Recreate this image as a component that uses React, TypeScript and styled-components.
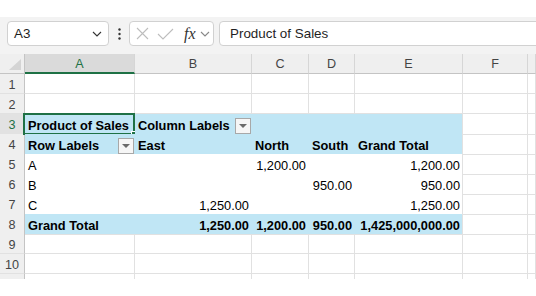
import React from "react";
import { createGlobalStyle, styled, css } from "styled-components";

const COLS = "25px 110px 117px 57px 46px 108px 65px 1fr";
const GREEN = "#1e7145";
const GRID = "#e1e1e1";
const PIVOT_BLUE = "#c0e6f5";
const PIVOT_LINE = "#5fb1de";

const GlobalStyle = createGlobalStyle`
    html, body {
        margin: 0;
        background: #fff;
        font-family: "Liberation Sans", Arial, sans-serif;
    }
`;

const Page = styled.div`
    width: 536px;
    height: 296px;
    overflow: hidden;
    display: flex;
    flex-direction: column;
`;

const TopStrip = styled.div`
    height: 17px;
    background: #fff;
`;

const Toolbar = styled.div`
    height: 37px;
    box-sizing: border-box;
    padding: 4px 0 0 7px;
    background: #f3f3f3;
    display: flex;
    align-items: flex-start;
    overflow: hidden;
`;

const Box = styled.div`
    height: 25px;
    box-sizing: border-box;
    border: 1px solid #d1d1d1;
    border-radius: 4px;
    background: #fff;
    display: flex;
    align-items: center;
`;

const NameBox = styled(Box)`
    width: 102px;
    padding: 0 6px 0 6px;
    justify-content: space-between;
    font-size: 13.4px;
    color: #1f1f1f;
`;

const MoreButton = styled.div`
    width: 20px;
    height: 25px;
    display: flex;
    align-items: center;
    justify-content: center;
`;

const FormulaButtons = styled(Box)`
    width: 85px;
    padding-left: 6px;
    gap: 8px;
`;

const Fx = styled.span`
    font-family: "Liberation Serif", "Times New Roman", serif;
    font-style: italic;
    font-size: 16px;
    color: #333;
    margin-left: 2px;
    margin-right: -4px;
`;

const FormulaInput = styled(Box)`
    flex: 1;
    margin-left: 5px;
    margin-right: -8px;
    padding-left: 10px;
    font-size: 13.4px;
    color: #1f1f1f;
`;

const Viewport = styled.div`
    height: 225px;
    overflow: hidden;
    background: #fff;
`;

const Row = styled.div`
    display: grid;
    grid-template-columns: ${COLS};
    height: 20px;
`;

const Corner = styled.div`
    position: relative;
    background: #efefef;
    border-right: 1px solid #c4c4c4;
    border-bottom: 1px solid #c4c4c4;
    box-sizing: border-box;
`;

const CornerMark = styled.span`
    position: absolute;
    right: 3px;
    bottom: 3px;
    width: 12px;
    height: 11px;
    background: #d4d4d4;
    clip-path: polygon(100% 0, 100% 100%, 0 100%);
`;

const ColHead = styled.div<{ $active?: boolean }>`
    box-sizing: border-box;
    background: ${(p) => (p.$active ? "#dadada" : "#efefef")};
    border-right: 1px solid #d6d6d6;
    border-bottom: ${(p) => (p.$active ? `2px solid ${GREEN}` : "1px solid #c4c4c4")};
    color: ${(p) => (p.$active ? GREEN : "#444")};
    font-size: 12.6px;
    display: flex;
    align-items: center;
    justify-content: center;
    padding-top: ${(p) => (p.$active ? "1px" : "0")};
`;

const RowHead = styled.div<{ $active?: boolean }>`
    box-sizing: border-box;
    background: ${(p) => (p.$active ? "#e2e2e2" : "#efefef")};
    border-right: 1px solid #c4c4c4;
    border-bottom: 1px solid ${GRID};
    color: ${(p) => (p.$active ? GREEN : "#444")};
    font-size: 12.6px;
    line-height: 16px;
    padding-top: 3px;
    text-align: center;
`;

type Band = "head" | "body" | "total";

const Cell = styled.div<{
    $band?: Band;
    $last?: boolean;
    $lineBelow?: boolean;
    $bold?: boolean;
    $right?: boolean;
}>`
    position: relative;
    box-sizing: border-box;
    display: flex;
    justify-content: ${(p) => (p.$right ? "flex-end" : "flex-start")};
    padding: 4px 2px 0 3px;
    font-size: 12.8px;
    line-height: 16px;
    white-space: nowrap;
    color: #000;
    font-weight: ${(p) => (p.$bold ? 700 : 400)};
    border-right: 1px solid ${GRID};
    border-bottom: 1px solid ${GRID};

    ${(p) =>
        p.$band &&
        css`
            background: ${p.$band === "body" ? "#fff" : PIVOT_BLUE};
            border-right-color: ${p.$last ? GRID : "transparent"};
            border-bottom-color: ${p.$lineBelow
                ? PIVOT_LINE
                : p.$band === "total"
                  ? GRID
                  : "transparent"};
        `}
`;

const FilterButton = styled.span`
    width: 16px;
    height: 16px;
    box-sizing: border-box;
    margin-left: auto;
    margin-right: -2px;
    border: 1px solid #a8a8a8;
    background: #f6f6f6;
    display: flex;
    align-items: center;
    justify-content: center;

    &::after {
        content: "";
        width: 0;
        height: 0;
        border-left: 4px solid transparent;
        border-right: 4px solid transparent;
        border-top: 4px solid #6b6b6b;
    }
`;

const Selection = styled.span`
    position: absolute;
    inset: -1px -1px -1px -2px;
    border: 2px solid ${GREEN};
    pointer-events: none;

    &::after {
        content: "";
        position: absolute;
        right: -5px;
        bottom: -5px;
        width: 5px;
        height: 5px;
        background: ${GREEN};
        border: 1px solid #fff;
    }
`;

type CellDef = { text?: string; bold?: boolean; right?: boolean; filter?: boolean };
type RowDef = { band?: Band; lineBelow?: boolean; cells: CellDef[] };

const rows: RowDef[] = [
    { cells: [] },
    { cells: [] },
    {
        band: "head",
        cells: [
            { text: "Product of Sales", bold: true },
            { text: "Column Labels", bold: true, filter: true },
            {},
            {},
            {},
        ],
    },
    {
        band: "head",
        lineBelow: true,
        cells: [
            { text: "Row Labels", bold: true, filter: true },
            { text: "East", bold: true },
            { text: "North", bold: true },
            { text: "South", bold: true },
            { text: "Grand Total", bold: true },
        ],
    },
    {
        band: "body",
        cells: [{ text: "A" }, {}, { text: "1,200.00", right: true }, {}, { text: "1,200.00", right: true }],
    },
    {
        band: "body",
        cells: [{ text: "B" }, {}, {}, { text: "950.00", right: true }, { text: "950.00", right: true }],
    },
    {
        band: "body",
        lineBelow: true,
        cells: [{ text: "C" }, { text: "1,250.00", right: true }, {}, {}, { text: "1,250.00", right: true }],
    },
    {
        band: "total",
        cells: [
            { text: "Grand Total", bold: true },
            { text: "1,250.00", bold: true, right: true },
            { text: "1,200.00", bold: true, right: true },
            { text: "950.00", bold: true, right: true },
            { text: "1,425,000,000.00", bold: true, right: true },
        ],
    },
    { cells: [] },
    { cells: [] },
    { cells: [] },
];

// the last column is only partly in view, so its header stays blank
const letters = ["A", "B", "C", "D", "E", "F", ""];

function Chevron({ color }: { color: string }) {
    return (
        <svg width="10" height="6" viewBox="0 0 10 6">
            <path d="M1 1l4 4 4-4" fill="none" stroke={color} strokeWidth="1.1" />
        </svg>
    );
}

function FormulaBar() {
    return (
        <Toolbar>
            <NameBox>
                <span>A3</span>
                <Chevron color="#333" />
            </NameBox>
            <MoreButton>
                <svg width="3" height="12" viewBox="0 0 3 12">
                    <circle cx="1.5" cy="1.5" r="1.2" fill="#333" />
                    <circle cx="1.5" cy="6" r="1.2" fill="#333" />
                    <circle cx="1.5" cy="10.5" r="1.2" fill="#333" />
                </svg>
            </MoreButton>
            <FormulaButtons>
                <svg width="13" height="13" viewBox="0 0 13 13">
                    <path d="M1 1l11 11M12 1L1 12" stroke="#bdbdbd" strokeWidth="1.1" />
                </svg>
                <svg width="17" height="12" viewBox="0 0 17 12">
                    <path d="M1 6l5 5L16 1" fill="none" stroke="#bdbdbd" strokeWidth="1.1" />
                </svg>
                <Fx>fx</Fx>
                <Chevron color="#888" />
            </FormulaButtons>
            <FormulaInput>Product of Sales</FormulaInput>
        </Toolbar>
    );
}

export default function App() {
    return (
        <Page>
            <GlobalStyle />
            <TopStrip />
            <FormulaBar />
            <Viewport>
                <Row>
                    <Corner>
                        <CornerMark />
                    </Corner>
                    {letters.map((l, i) => (
                        <ColHead key={i} $active={l === "A"}>
                            {l}
                        </ColHead>
                    ))}
                </Row>
                {rows.map((row, r) => (
                    <Row key={r}>
                        {/* row 11 is cut by the viewport; its number is not visible */}
                        <RowHead $active={r === 2}>{r < 10 ? r + 1 : ""}</RowHead>
                        {letters.map((_, c) => {
                            const def = c < 5 ? row.cells[c] || {} : {};
                            const inPivot = !!row.band && c < 5;
                            return (
                                <Cell
                                    key={c}
                                    $band={inPivot ? row.band : undefined}
                                    $last={c === 4}
                                    $lineBelow={inPivot && row.lineBelow}
                                    $bold={def.bold}
                                    $right={def.right}
                                >
                                    {def.text}
                                    {def.filter && <FilterButton />}
                                    {r === 2 && c === 0 && <Selection />}
                                </Cell>
                            );
                        })}
                    </Row>
                ))}
            </Viewport>
        </Page>
    );
}
